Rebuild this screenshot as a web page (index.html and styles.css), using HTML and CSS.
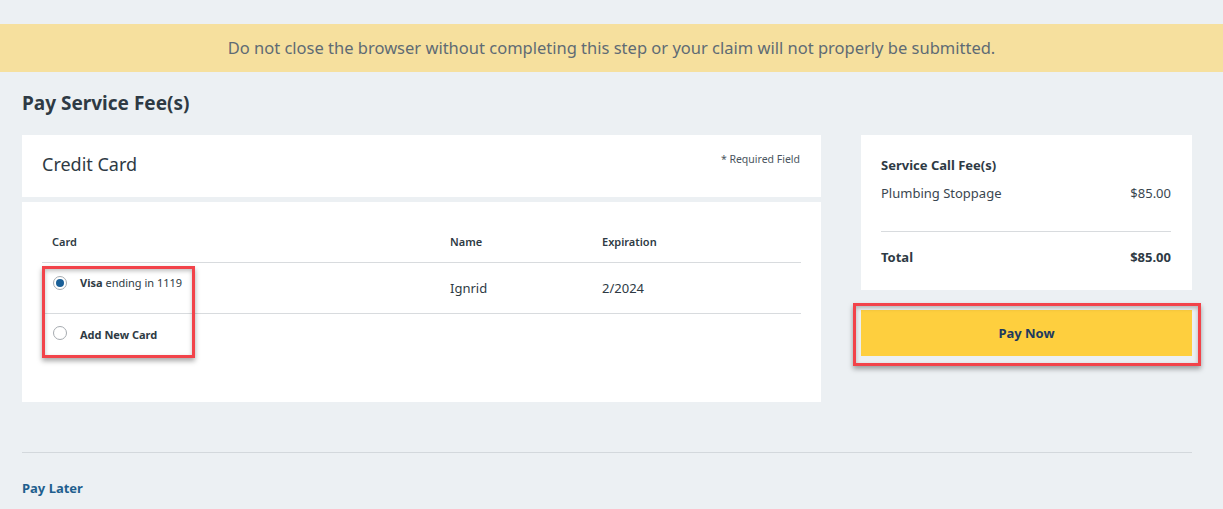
FILE: index.html
```html
<!DOCTYPE html>
<html lang="en">
<head>
<meta charset="utf-8">
<title>Pay Service Fee(s)</title>
<link rel="stylesheet" href="styles.css">
</head>
<body>
  <div class="banner">Do not close the browser without completing this step or your claim will not properly be submitted.</div>
  <main class="main">
    <h1 class="title">Pay Service Fee(s)</h1>
    <div class="layout">
      <section class="left">
        <div class="card card-head">
          <h2 class="card-title">Credit Card</h2>
          <span class="required">* Required Field</span>
        </div>
        <div class="card card-body">
          <div class="row head-row">
            <div class="col col-card">Card</div>
            <div class="col col-name">Name</div>
            <div class="col col-exp">Expiration</div>
          </div>
          <div class="row item-row">
            <div class="col col-card">
              <span class="radio checked"></span>
              <span class="label"><b>Visa</b> ending in 1119</span>
            </div>
            <div class="col col-name mid">Ignrid</div>
            <div class="col col-exp mid">2/2024</div>
          </div>
          <div class="row item-row last">
            <div class="col col-card">
              <span class="radio"></span>
              <span class="label"><b>Add New Card</b></span>
            </div>
          </div>
          <div class="highlight hl-cards"></div>
        </div>
      </section>
      <aside class="right">
        <div class="card summary">
          <div class="sum-title">Service Call Fee(s)</div>
          <div class="sum-line"><span>Plumbing Stoppage</span><span>$85.00</span></div>
          <div class="sum-total"><span>Total</span><span>$85.00</span></div>
        </div>
        <div class="pay-wrap">
          <button class="pay-btn">Pay Now</button>
          <div class="highlight hl-pay"></div>
        </div>
      </aside>
    </div>
    <hr class="divider">
    <a class="pay-later" href="#">Pay Later</a>
  </main>
</body>
</html>
```

FILE: styles.css
```css
* { box-sizing: border-box; }
body {
  margin: 0;
  background: #ecf0f3;
  font-family: "Noto Sans", "Open Sans", sans-serif;
  color: #2e3a44;
}
.banner {
  margin-top: 24px;
  height: 48px;
  background: #f6e09e;
  color: #5f6b74;
  font-size: 16.5px;
  display: flex;
  align-items: center;
  justify-content: center;
  padding-bottom: 1px;
}
.main {
  padding: 0 31px 0 22px;
}
.title {
  margin: 18px 0 0;
  font-size: 19px;
  font-weight: 700;
  line-height: 26px;
  color: #2e3a44;
}
.layout {
  margin-top: 19px;
  display: grid;
  grid-template-columns: 799px 331px;
  column-gap: 40px;
  align-items: start;
}
.card { background: #fff; }
.card-head {
  height: 62px;
  display: flex;
  justify-content: space-between;
  align-items: flex-start;
  padding: 0 21px 0 20px;
}
.card-title {
  margin: 17px 0 0;
  font-size: 18px;
  font-weight: 400;
  line-height: 24px;
  color: #2e3a44;
}
.required {
  margin-top: 16px;
  font-size: 10.5px;
  color: #4a5560;
  line-height: 16px;
}
.card-body {
  margin-top: 5px;
  height: 200px;
  padding: 20px 20px 0;
  position: relative;
}
.row {
  display: flex;
  border-bottom: 1px solid #d8dbde;
}
.row.last { border-bottom: none; }
.col { padding-left: 10px; font-size: 13px; }
.col-card { width: 398px; }
.col-name { width: 152px; }
.col-exp { flex: 1; }
.head-row {
  height: 41px;
  align-items: flex-start;
}
.head-row .col { font-size: 11px; font-weight: 600; line-height: 16px; padding-top: 12px; }
.item-row { height: 51px; }
.item-row .col-card {
  display: flex;
  align-items: flex-start;
  padding-top: 13px;
  padding-left: 11px;
}
.item-row.last { height: 46px; }
.item-row.last .col-card { padding-top: 12px; }
.mid { padding-top: 16px; font-size: 13px; color: #2e3a44; }
.radio {
  width: 14px;
  height: 14px;
  border-radius: 50%;
  border: 1px solid #a6abb0;
  background: #fff;
  position: relative;
  flex: none;
}
.radio.checked::after {
  content: "";
  position: absolute;
  left: 2px; top: 2px;
  width: 8px; height: 8px;
  border-radius: 50%;
  background: #1a5f97;
}
.label {
  margin-left: 13px;
  font-size: 11px;
  line-height: 14px;
  color: #2e3a44;
}
.item-row:not(.last) .label { margin-top: 0; }
.item-row.last .label { margin-top: 2px; }
.label b { font-weight: 700; }
.summary {
  height: 155px;
  padding: 20px 21px 0 20px;
  font-size: 13px;
}
.sum-title { font-weight: 700; line-height: 20px; }
.sum-line {
  display: flex;
  justify-content: space-between;
  line-height: 20px;
  margin-top: 8px;
  padding-bottom: 28px;
  border-bottom: 1px solid #d8dbde;
  color: #3a4650;
}
.sum-total {
  display: flex;
  justify-content: space-between;
  font-weight: 700;
  line-height: 20px;
  margin-top: 15px;
}
.pay-wrap {
  position: relative;
  margin-top: 20px;
}
.pay-btn {
  display: block;
  width: 100%;
  height: 46px;
  border: none;
  background: #fecf3e;
  color: #1d3a5f;
  font-family: inherit;
  font-size: 13px;
  font-weight: 700;
}
.highlight {
  position: absolute;
  border: 3px solid #f2434a;
  box-shadow: 0 3px 5px rgba(0,0,0,.35), inset 0 2px 4px rgba(0,0,0,.25);
  pointer-events: none;
}
.hl-pay { left: -8px; right: -9px; top: -7px; bottom: -10px; }
.hl-cards { left: 20px; top: 64px; width: 153px; height: 92px; }
.divider {
  margin: 50px 0 0;
  border: none;
  border-top: 1px solid #d3d8dc;
}
.pay-later {
  display: inline-block;
  margin-top: 26px;
  font-size: 13px;
  font-weight: 700;
  color: #1f5f8e;
  text-decoration: none;
}
```
